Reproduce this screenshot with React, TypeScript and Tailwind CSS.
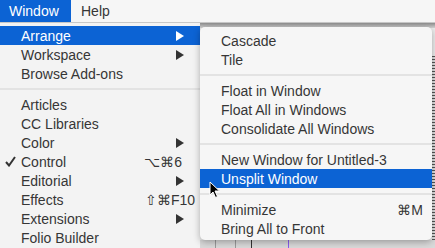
import React from "react";

type Item =
  | { sep: true }
  | { label: string; sub?: boolean; shortcut?: string; check?: boolean; active?: boolean; scPad?: string };

const mainItems: Item[] = [
  { label: "Arrange", sub: true, active: true },
  { label: "Workspace", sub: true },
  { label: "Browse Add-ons" },
  { sep: true },
  { label: "Articles" },
  { label: "CC Libraries" },
  { label: "Color", sub: true },
  { label: "Control", check: true, shortcut: "⌥⌘6", scPad: "pr-[18px]" },
  { label: "Editorial", sub: true },
  { label: "Effects", shortcut: "⇧⌘F10", scPad: "pr-[5px]" },
  { label: "Extensions", sub: true },
  { label: "Folio Builder" },
];

const subItems: Item[] = [
  { label: "Cascade" },
  { label: "Tile" },
  { sep: true },
  { label: "Float in Window" },
  { label: "Float All in Windows" },
  { label: "Consolidate All Windows" },
  { sep: true },
  { label: "New Window for Untitled-3" },
  { label: "Unsplit Window", active: true },
  { sep: true },
  { label: "Minimize", shortcut: "⌘M", scPad: "pr-[9px]" },
  { label: "Bring All to Front" },
];

function Arrow({ white }: { white?: boolean }) {
  return (
    <svg width="8" height="10" viewBox="0 0 8 10" className="mr-[16px]">
      <polygon points="0,0 8,5 0,10" fill={white ? "#ffffff" : "#333333"} />
    </svg>
  );
}

function Check() {
  return (
    <svg width="11" height="11" viewBox="0 0 11 11" className="ml-[5px] mr-[5px]">
      <path d="M1 6 L4 9.5 L10 1" fill="none" stroke="#333" strokeWidth="2" />
    </svg>
  );
}

function Row({ item }: { item: Item }) {
  if ("sep" in item) {
    return (
      <div className="flex h-[12px] items-center">
        <div className="h-[2px] w-full bg-[#e3e3e3]" />
      </div>
    );
  }
  return (
    <div
      className={`flex h-[19px] items-center ${
        item.active ? "bg-[#0c63d4] text-white" : "text-[#363636]"
      }`}
    >
      {item.check ? <Check /> : <span className="w-[21px]" />}
      <span className="flex-1 whitespace-nowrap">{item.label}</span>
      {item.sub && <Arrow white={item.active} />}
      {item.shortcut && <span className={`whitespace-nowrap ${item.scPad ?? ""}`}>{item.shortcut}</span>}
    </div>
  );
}

function Cursor() {
  return (
    <svg width="12" height="18" viewBox="0 0 12 18" className="absolute left-[209px] top-[181px]">
      <path d="M1 1 L1 14 L4 11 L6.5 16.5 L8.5 15.5 L6 10 L10.5 10 Z" fill="#000" stroke="#fff" strokeWidth="1" />
    </svg>
  );
}

export default function App() {
  return (
    <div
      className="relative h-[248px] w-[435px] overflow-hidden bg-[#f3f3f3] text-[14px] leading-none"
      style={{ fontFamily: '"Liberation Sans", Arial, sans-serif' }}
    >
      <div className="flex h-[22px] items-center bg-[#f6f6f6] text-[#363636]">
        <div className="flex h-full w-[71px] items-center bg-[#0c63d4] pl-[9px] text-white">Window</div>
        <div className="pl-[10px]">Help</div>
      </div>
      <div className="h-px bg-[#c8c8c8]" />

      <div className="flex h-[225px]">
        <div className="w-[200px] pt-[3px]">
          {mainItems.map((it, i) => (
            <Row key={i} item={it} />
          ))}
        </div>

        <div className="flex flex-1 flex-col bg-[#ececec]">
          <div className="h-[5px] bg-gradient-to-b from-[#8c8c8c] to-[#d4d4d4]" />
          <div className="flex flex-1 justify-end">
            <div className="mt-[28px] w-[3px] bg-[repeating-linear-gradient(#555_0px,#555_1px,#ddd_1px,#ddd_3px)]" />
          </div>
          <div className="flex h-[8px] bg-[#d9d9d9]">
            <div className="ml-[15px] w-px bg-[#9a9a9a]" />
            <div className="ml-[19px] w-px bg-[#9a9a9a]" />
            <div className="ml-[15px] w-px bg-[#333]" />
            <div className="ml-[36px] w-px bg-[#8a5cf0]" />
          </div>
        </div>
      </div>

      <div className="absolute left-[200px] top-[27px] h-[213px] w-[232px] rounded-[5px] bg-[#f6f6f6] pt-[4px] shadow-[0_2px_7px_rgba(0,0,0,0.3)]">
        {subItems.map((it, i) => (
          <Row key={i} item={it} />
        ))}
      </div>

      <Cursor />
    </div>
  );
}
